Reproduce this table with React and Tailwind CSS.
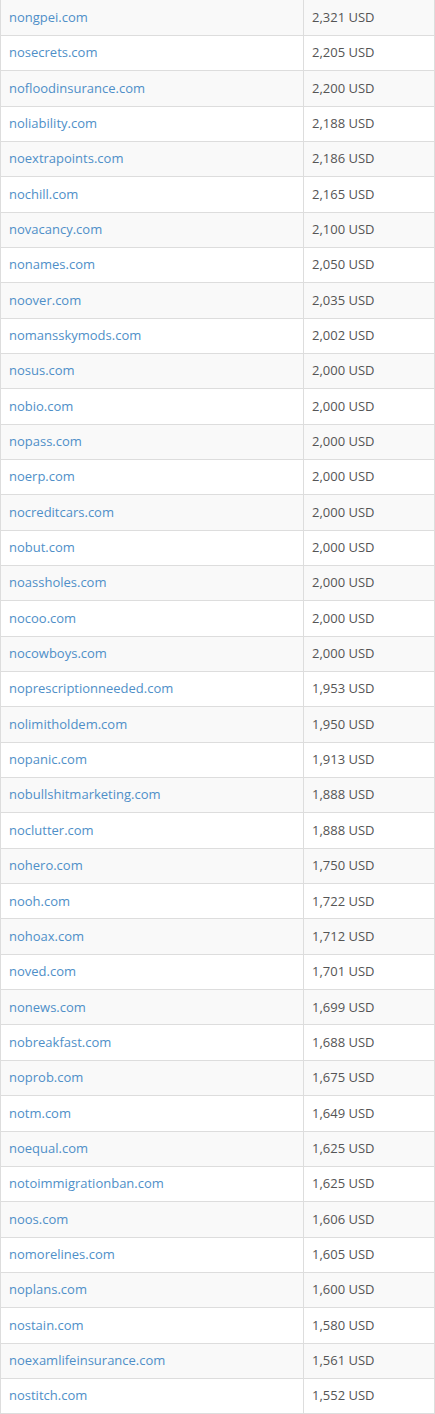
import React from "react";

const rows = [
  ["nongpei.com", "2,321"],
  ["nosecrets.com", "2,205"],
  ["nofloodinsurance.com", "2,200"],
  ["noliability.com", "2,188"],
  ["noextrapoints.com", "2,186"],
  ["nochill.com", "2,165"],
  ["novacancy.com", "2,100"],
  ["nonames.com", "2,050"],
  ["noover.com", "2,035"],
  ["nomansskymods.com", "2,002"],
  ["nosus.com", "2,000"],
  ["nobio.com", "2,000"],
  ["nopass.com", "2,000"],
  ["noerp.com", "2,000"],
  ["nocreditcars.com", "2,000"],
  ["nobut.com", "2,000"],
  ["noassholes.com", "2,000"],
  ["nocoo.com", "2,000"],
  ["nocowboys.com", "2,000"],
  ["noprescriptionneeded.com", "1,953"],
  ["nolimitholdem.com", "1,950"],
  ["nopanic.com", "1,913"],
  ["nobullshitmarketing.com", "1,888"],
  ["noclutter.com", "1,888"],
  ["nohero.com", "1,750"],
  ["nooh.com", "1,722"],
  ["nohoax.com", "1,712"],
  ["noved.com", "1,701"],
  ["nonews.com", "1,699"],
  ["nobreakfast.com", "1,688"],
  ["noprob.com", "1,675"],
  ["notm.com", "1,649"],
  ["noequal.com", "1,625"],
  ["notoimmigrationban.com", "1,625"],
  ["noos.com", "1,606"],
  ["nomorelines.com", "1,605"],
  ["noplans.com", "1,600"],
  ["nostain.com", "1,580"],
  ["noexamlifeinsurance.com", "1,561"],
  ["nostitch.com", "1,552"],
];

export default function App() {
  return (
    <div className="w-[435px] bg-white font-['Open_Sans',sans-serif] text-[13px]">
      {/* sales table */}
      <table className="w-full border-collapse border-x border-[#dddddd]">
        <tbody>
          {rows.map(([domain, price], i) => (
            <tr
              key={domain}
              className={`h-[35.35px] border-b border-[#dddddd] ${
                i % 2 === 0 ? "bg-[#f9f9f9]" : "bg-white"
              }`}
            >
              <td className="w-[303px] border-r border-[#dddddd] px-2 align-middle">
                <a href="#" className="text-[#4f8fc8]">
                  {domain}
                </a>
              </td>
              <td className="px-2 align-middle text-[#555555]">{price} USD</td>
            </tr>
          ))}
        </tbody>
      </table>
    </div>
  );
}
